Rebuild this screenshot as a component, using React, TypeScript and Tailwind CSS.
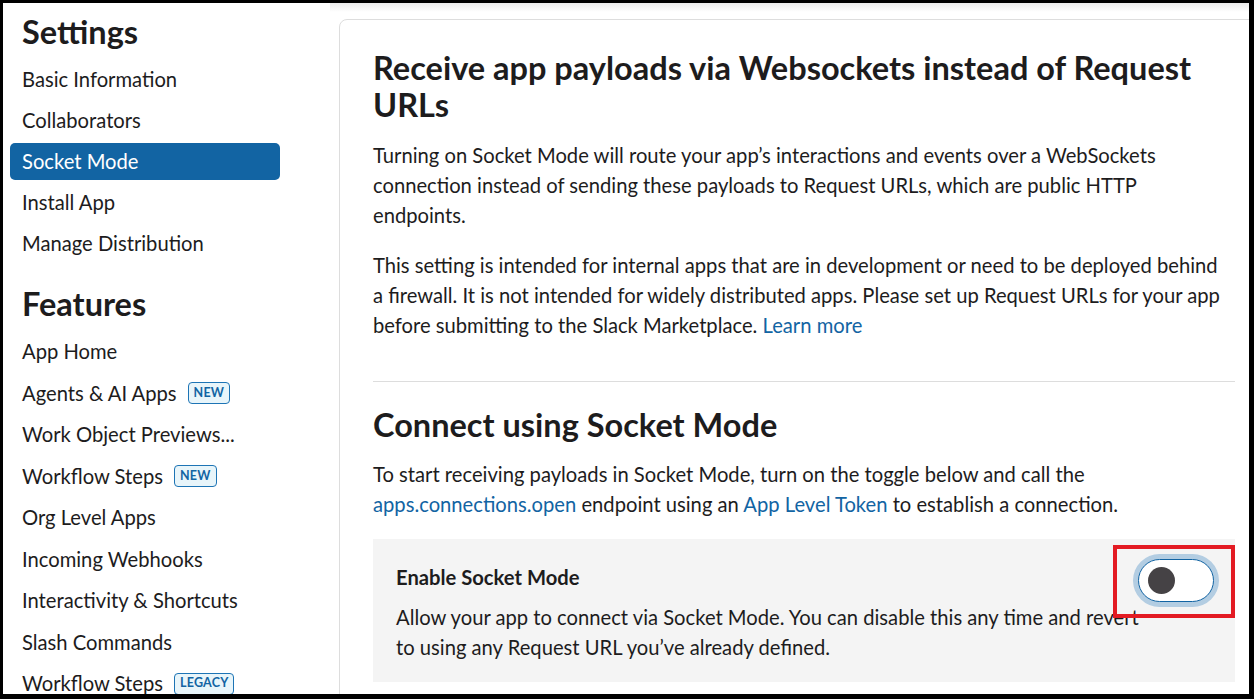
import React from "react";

const settingsLinks = ["Basic Information", "Collaborators", "Socket Mode", "Install App", "Manage Distribution"];

const featureLinks: { label: string; badge?: string }[] = [
  { label: "App Home" },
  { label: "Agents & AI Apps", badge: "NEW" },
  { label: "Work Object Previews..." },
  { label: "Workflow Steps", badge: "NEW" },
  { label: "Org Level Apps" },
  { label: "Incoming Webhooks" },
  { label: "Interactivity & Shortcuts" },
  { label: "Slash Commands" },
  { label: "Workflow Steps", badge: "LEGACY" },
];

const Badge = ({ text }: { text: string }) => (
  <span className="ml-[11px] inline-flex h-[22px] items-center rounded-[4px] border-[1.5px] border-[#1d74b5] bg-[#e8f5fa] px-[5px] text-[12.5px] font-bold leading-none tracking-[0.2px] text-[#1264a3]">
    {text}
  </span>
);

const NavItem = ({ label, active, badge }: { label: string; active?: boolean; badge?: string }) => (
  <div
    className={`mx-[7px] flex h-[37px] w-[270px] shrink-0 items-center rounded-[5px] px-[12px] text-[20.2px] ${
      active ? "bg-[#1264a3] text-white" : "text-[#1d1c1d]"
    }`}
  >
    <span>{label}</span>
    {badge && <Badge text={badge} />}
  </div>
);

const Sidebar = () => (
  <div className="flex w-[327px] shrink-0 flex-col pt-[9px]">
    <h2 className="px-[19px] text-[32.5px] font-bold leading-[40px] text-[#1d1c1d]">Settings</h2>
    <div className="mt-[9px] flex flex-col gap-[4px]">
      {settingsLinks.map((l) => (
        <NavItem key={l} label={l} active={l === "Socket Mode"} />
      ))}
    </div>
    <h2 className="mt-[22px] px-[19px] text-[32.5px] font-bold leading-[40px] text-[#1d1c1d]">Features</h2>
    <div className="mt-[9px] flex flex-col gap-[4.5px]">
      {featureLinks.map((f, i) => (
        <NavItem key={i} label={f.label} badge={f.badge} />
      ))}
    </div>
  </div>
);

const Link = ({ children }: { children: React.ReactNode }) => (
  <span className="text-[#1264a3]">{children}</span>
);

const Toggle = () => (
  <div className="relative shrink-0">
    {/* red annotation box */}
    <div className="absolute left-[-25px] top-[-14px] h-[73px] w-[122px] border-[4.5px] border-[#e31b23]" />
    <div className="flex h-[43px] w-[76px] items-center rounded-full border-[1.5px] border-[#1264a3] bg-white pl-[9px] shadow-[0_0_0_5px_#b3cde2]">
      <div className="h-[27px] w-[27px] rounded-full bg-[#454245]" />
    </div>
  </div>
);

export default function App() {
  return (
    <div
      className="h-[699px] w-[1254px] overflow-hidden bg-black pb-[5px] pl-[3px] pr-[5px] pt-[3px]"
      style={{ fontFamily: "Lato, 'Noto Sans', sans-serif" }}
    >
      <div className="flex h-full overflow-hidden bg-white">
        <Sidebar />
        <div className="flex-1 bg-[linear-gradient(#ebebeb,#ffffff_9px)] pl-[9px] pt-[16px]">
          <div className="w-[930px] rounded-[8px] border border-[#dddddd] bg-white px-[33px] pb-[60px] pt-[29px] text-[#1d1c1d]">
            <h1 className="text-[32.5px] font-bold leading-[37px]">
              Receive app payloads via Websockets instead of Request URLs
            </h1>
            <div className="mt-[17px] w-[855px] text-[20.2px] leading-[30px]">
              <p>
                Turning on Socket Mode will route your app’s interactions and events over a WebSockets connection
                instead of sending these payloads to Request URLs, which are public HTTP endpoints.
              </p>
              <p className="mt-[20px]">
                This setting is intended for internal apps that are in development or need to be deployed behind a
                firewall. It is not intended for widely distributed apps. Please set up Request URLs for your app
                before submitting to the Slack Marketplace. <Link>Learn more</Link>
              </p>
            </div>
            <div className="mt-[41px] h-px bg-[#dddddd]" />
            <h2 className="mt-[24px] text-[32.5px] font-bold leading-[37px]">Connect using Socket Mode</h2>
            <p className="mt-[16px] w-[855px] text-[20.2px] leading-[30px]">
              To start receiving payloads in Socket Mode, turn on the toggle below and call the{" "}
              <Link>apps.connections.open</Link> endpoint using an <Link>App Level Token</Link> to establish a
              connection.
            </p>
            <div className="mt-[20px] bg-[#f4f4f4] pb-[20px] pl-[23px] pr-[21px] pt-[20px]">
              <div className="flex items-start justify-between">
                <div className="mt-[3px] text-[20.2px] font-bold leading-[30px]">Enable Socket Mode</div>
                <Toggle />
              </div>
              <p className="w-[755px] text-[20.2px] leading-[30px]">
                Allow your app to connect via Socket Mode. You can disable this any time and revert to using any
                Request URL you’ve already defined.
              </p>
            </div>
          </div>
        </div>
      </div>
    </div>
  );
}
